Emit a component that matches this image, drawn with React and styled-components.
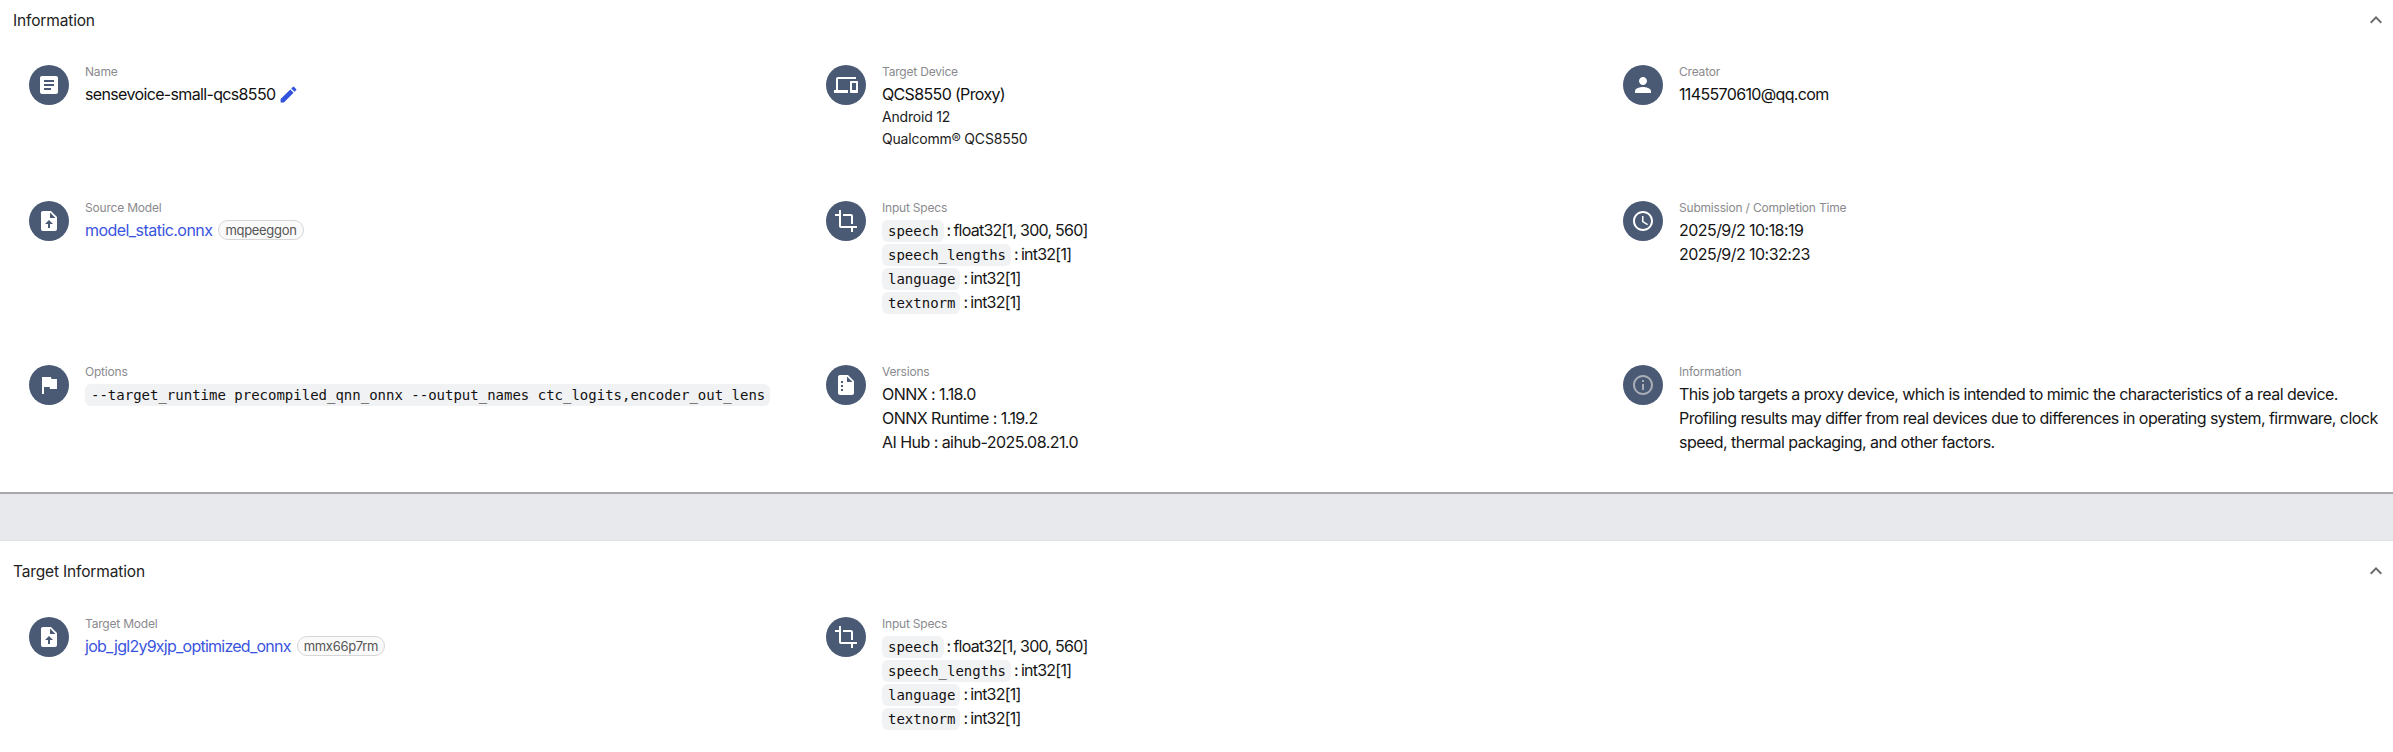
import React from 'react';
import styled, { createGlobalStyle } from 'styled-components';
import {
  MdArticle,
  MdDevices,
  MdPerson,
  MdCrop,
  MdAccessTime,
  MdAssistantPhoto,
  MdInfoOutline,
  MdEdit,
  MdExpandLess,
} from 'react-icons/md';

const GlobalStyle = createGlobalStyle`
  html, body {
    margin: 0;
    padding: 0;
    background: #fff;
    overflow: hidden;
  }
  body {
    font-family: "Inter", "Liberation Sans", sans-serif;
    color: #1a1a1a;
  }
`;

const Page = styled.div`
  width: 2393px;
  height: 752px;
  overflow: hidden;
  background: #fff;
`;

const Section = styled.section`
  background: #fff;
  border-bottom: ${(p) => (p.$last ? 'none' : '2px solid #a9a9ab')};
`;

const Header = styled.div`
  display: flex;
  align-items: center;
  justify-content: space-between;
  height: ${(p) => p.$height}px;
  padding: 0 5px 0 13px;
`;

const Title = styled.h2`
  margin: 0;
  font-size: 15.5px;
  font-weight: 400;
  letter-spacing: -0.15px;
  color: #222;
`;

const Chevron = styled(MdExpandLess)`
  width: 24px;
  height: 24px;
  color: #6b6b6b;
`;

const Grid = styled.div`
  display: grid;
  grid-template-columns: 797px 797px 1fr;
  row-gap: 51px;
  padding: ${(p) => p.$pad}px 0 0 29px;
`;

const Item = styled.div`
  display: flex;
  align-items: flex-start;
  gap: 16px;
  min-width: 0;
`;

const Circle = styled.div`
  flex: none;
  display: flex;
  align-items: center;
  justify-content: center;
  width: 40px;
  height: 40px;
  border-radius: 50%;
  background: #4a5a75;
  color: ${(p) => (p.$muted ? '#a9aeb6' : '#fff')};
  font-size: 24px;
`;

const Body = styled.div`
  min-width: 0;
`;

const Label = styled.div`
  font-size: 12px;
  line-height: 14px;
  letter-spacing: -0.2px;
  color: #8a8a8e;
  margin-bottom: 3px;
`;

const Value = styled.div`
  display: flex;
  align-items: center;
  gap: 6px;
  font-size: 16px;
  line-height: 24px;
  letter-spacing: -0.65px;
  color: #111;
`;

const EditIcon = styled(MdEdit)`
  width: 21px;
  height: 21px;
  margin-left: -3px;
  color: #3253dc;
`;

const Sub = styled.div`
  font-size: 14px;
  line-height: 22px;
  letter-spacing: -0.2px;
  color: #1c1c1c;
`;

const Link = styled.a`
  color: #3a55e0;
  text-decoration: none;
  letter-spacing: ${(p) => p.$tracking}px;
`;

const Chip = styled.span`
  display: inline-flex;
  align-items: center;
  box-sizing: border-box;
  height: 20px;
  padding: 0 6px;
  border: 1px solid #d6d6d6;
  border-radius: 10px;
  font-size: 13px;
  letter-spacing: -0.3px;
  color: #555;
  background: #fafafa;
`;

const Code = styled.code`
  display: inline-block;
  font-family: "DejaVu Sans Mono", "Liberation Mono", monospace;
  font-size: 14px;
  line-height: 22px;
  letter-spacing: 0;
  padding: 0 5px 0 6px;
  border-radius: 6px;
  background: #f1f2f4;
  color: #111;
`;

const Sep = styled.span`
  margin: 0 3px;
`;

const Line = styled.div`
  font-size: 16px;
  line-height: 24px;
  letter-spacing: -0.55px;
  color: #161616;
`;

const SpecLine = styled(Line)`
  letter-spacing: -0.75px;
`;

const Spacer = styled.div`
  height: 38px;
`;

const Band = styled.div`
  height: 46px;
  background: #e8e9ed;
  border-bottom: 1px solid #e2e2e4;
`;

const PAGE = 'M6 2c-1.1 0-1.99.9-1.99 2L4 20c0 1.1.89 2 1.99 2H18c1.1 0 2-.9 2-2V8l-6-6H6zm7 7V3.5L18.5 9H13z';

const UploadGlyph = () => (
  <svg width="24" height="24" viewBox="0 0 24 24" fill="currentColor">
    <path fillRule="evenodd" d={`${PAGE}M12 11l-4 4h3v4h2v-4h3z`} />
  </svg>
);

const VersionGlyph = () => (
  <svg width="24" height="24" viewBox="0 0 24 24" fill="currentColor">
    <path fillRule="evenodd" d={`${PAGE}M7 8v2h2V8zm0 4v2h2v-2zm0 4v2h2v-2z`} />
  </svg>
);

const specs = [
  ['speech', 'float32[1, 300, 560]'],
  ['speech_lengths', 'int32[1]'],
  ['language', 'int32[1]'],
  ['textnorm', 'int32[1]'],
];

const Specs = () =>
  specs.map(([name, type]) => (
    <SpecLine key={name}>
      <Code>{name}</Code>
      <Sep>:</Sep>
      {type}
    </SpecLine>
  ));

const Info = ({ icon, label, muted, children }) => (
  <Item>
    <Circle $muted={muted}>{icon}</Circle>
    <Body>
      <Label>{label}</Label>
      {children}
    </Body>
  </Item>
);

const App = () => (
  <Page>
    <GlobalStyle />
    <Section>
      <Header $height={40}>
        <Title>Information</Title>
        <Chevron />
      </Header>
      <Grid $pad={25}>
        <Info icon={<MdArticle />} label="Name">
          <Value>
            sensevoice-small-qcs8550 <EditIcon />
          </Value>
        </Info>
        <Info icon={<MdDevices />} label="Target Device">
          <Value>QCS8550 (Proxy)</Value>
          <Sub>Android 12</Sub>
          <Sub>Qualcomm® QCS8550</Sub>
        </Info>
        <Info icon={<MdPerson />} label="Creator">
          <Value>1145570610@qq.com</Value>
        </Info>

        <Info icon={<UploadGlyph />} label="Source Model">
          <Value>
            <Link href="#" $tracking={-0.55}>model_static.onnx</Link> <Chip>mqpeeggon</Chip>
          </Value>
        </Info>
        <Info icon={<MdCrop />} label="Input Specs">
          <Specs />
        </Info>
        <Info icon={<MdAccessTime />} label="Submission / Completion Time">
          <Line>2025/9/2 10:18:19</Line>
          <Line>2025/9/2 10:32:23</Line>
        </Info>

        <Info icon={<MdAssistantPhoto />} label="Options">
          <Line>
            <Code>--target_runtime precompiled_qnn_onnx --output_names ctc_logits,encoder_out_lens</Code>
          </Line>
        </Info>
        <Info icon={<VersionGlyph />} label="Versions">
          <Line>ONNX : 1.18.0</Line>
          <Line>ONNX Runtime : 1.19.2</Line>
          <Line>AI Hub : aihub-2025.08.21.0</Line>
        </Info>
        <Info icon={<MdInfoOutline />} label="Information" muted>
          <Line>
            This job targets a proxy device, which is intended to mimic the characteristics of a real device.
            <br />
            Profiling results may differ from real devices due to differences in operating system, firmware, clock
            <br />
            speed, thermal packaging, and other factors.
          </Line>
        </Info>
      </Grid>
      <Spacer />
    </Section>
    <Band />
    <Section $last>
      <Header $height={60}>
        <Title>Target Information</Title>
        <Chevron />
      </Header>
      <Grid $pad={16}>
        <Info icon={<UploadGlyph />} label="Target Model">
          <Value>
            <Link href="#" $tracking={-0.75}>job_jgl2y9xjp_optimized_onnx</Link> <Chip>mmx66p7rm</Chip>
          </Value>
        </Info>
        <Info icon={<MdCrop />} label="Input Specs">
          <Specs />
        </Info>
      </Grid>
    </Section>
  </Page>
);

export default App;
